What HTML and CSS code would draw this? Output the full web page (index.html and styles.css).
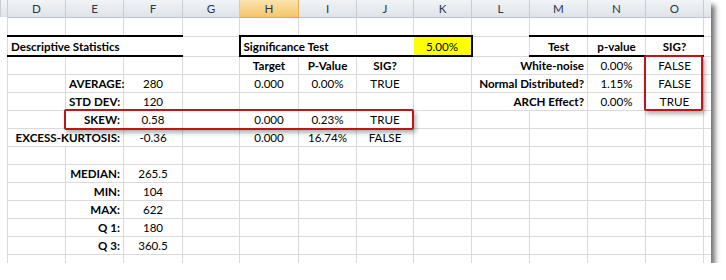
FILE: index.html
```html
<!DOCTYPE html>
<html>
<head>
<meta charset="utf-8">
<link rel="stylesheet" href="styles.css">
</head>
<body>
<div class="sheet">
<table class="grid">
<colgroup>
<col class="w7"><col class="w58"><col class="w58"><col class="w59"><col class="w57"><col class="w59"><col class="w58"><col class="w57"><col class="w58"><col class="w58"><col class="w58"><col class="w58"><col class="w58"><col class="w8">
</colgroup>
<tr class="hdr"><th class="c0"></th><th>D</th><th>E</th><th>F</th><th>G</th><th class="sel">H</th><th>I</th><th>J</th><th>K</th><th>L</th><th>M</th><th>N</th><th>O</th><th></th></tr>
<tr class="h19"><td class="c0"></td><td></td><td></td><td></td><td></td><td></td><td></td><td></td><td></td><td></td><td></td><td></td><td></td><td></td></tr>
<tr class="h20"><td class="c0"></td><td class="b bx l" colspan="2">Descriptive Statistics</td><td class="bx"></td><td></td><td class="b bx l bl" colspan="3">Significance Test</td><td class="alpha">5.00%</td><td></td><td class="b bt c">Test</td><td class="b bt c">p-value</td><td class="b bt c">SIG?</td><td></td></tr>
<tr><td class="c0"></td><td></td><td></td><td></td><td></td><td class="b c">Target</td><td class="b c">P-Value</td><td class="b c">SIG?</td><td></td><td class="b r" colspan="2">White-noise</td><td class="c">0.00%</td><td class="c">FALSE</td><td></td></tr>
<tr><td class="c0"></td><td></td><td class="b r">AVERAGE:</td><td class="c">280</td><td></td><td class="c">0.000</td><td class="c">0.00%</td><td class="c">TRUE</td><td></td><td class="b r" colspan="2">Normal Distributed?</td><td class="c">1.15%</td><td class="c">FALSE</td><td></td></tr>
<tr><td class="c0"></td><td></td><td class="b r">STD DEV:</td><td class="c">120</td><td></td><td></td><td></td><td></td><td></td><td class="b r" colspan="2">ARCH Effect?</td><td class="c">0.00%</td><td class="c">TRUE</td><td></td></tr>
<tr><td class="c0"></td><td></td><td class="b r">SKEW:</td><td class="c">0.58</td><td></td><td class="c">0.000</td><td class="c">0.23%</td><td class="c">TRUE</td><td></td><td></td><td></td><td></td><td></td><td></td></tr>
<tr><td class="c0"></td><td class="b r" colspan="2">EXCESS-KURTOSIS:</td><td class="c">-0.36</td><td></td><td class="c">0.000</td><td class="c">16.74%</td><td class="c">FALSE</td><td></td><td></td><td></td><td></td><td></td><td></td></tr>
<tr><td class="c0"></td><td></td><td></td><td></td><td></td><td></td><td></td><td></td><td></td><td></td><td></td><td></td><td></td><td></td></tr>
<tr><td class="c0"></td><td></td><td class="b r">MEDIAN:</td><td class="c">265.5</td><td></td><td></td><td></td><td></td><td></td><td></td><td></td><td></td><td></td><td></td></tr>
<tr><td class="c0"></td><td></td><td class="b r">MIN:</td><td class="c">104</td><td></td><td></td><td></td><td></td><td></td><td></td><td></td><td></td><td></td><td></td></tr>
<tr><td class="c0"></td><td></td><td class="b r">MAX:</td><td class="c">622</td><td></td><td></td><td></td><td></td><td></td><td></td><td></td><td></td><td></td><td></td></tr>
<tr><td class="c0"></td><td></td><td class="b r">Q 1:</td><td class="c">180</td><td></td><td></td><td></td><td></td><td></td><td></td><td></td><td></td><td></td><td></td></tr>
<tr><td class="c0"></td><td></td><td class="b r">Q 3:</td><td class="c">360.5</td><td></td><td></td><td></td><td></td><td></td><td></td><td></td><td></td><td></td><td></td></tr>
<tr class="h9"><td class="c0"></td><td></td><td></td><td></td><td></td><td></td><td></td><td></td><td></td><td></td><td></td><td></td><td></td><td></td></tr>
</table>
<div class="mark mark-skew"></div>
<div class="mark mark-sig"></div>
</div>
</body>
</html>
```
FILE: styles.css
```css
html, body {
  margin: 0;
  background: #fff;
}
body {
  font-family: Lato, "Liberation Sans", sans-serif;
  font-size: 11.6px;
  color: #000;
}
.sheet {
  position: relative;
  width: 711px;
  height: 263px;
  overflow: hidden;
  box-shadow: 4px 5px 5px rgba(0, 0, 0, 0.55);
}
.grid {
  border-collapse: collapse;
  table-layout: fixed;
  width: 711px;
}
.w7 { width: 7px; }
.w8 { width: 8px; }
.w57 { width: 57px; }
.w58 { width: 58px; }
.w59 { width: 59px; }
.grid tr { height: 18px; }
.grid tr.hdr { height: 17px; }
.grid tr.h19 { height: 19px; }
.grid tr.h20 { height: 20px; }
.grid tr.h9 { height: 9px; }
.grid th {
  font-weight: normal;
  color: #27374a;
  background: linear-gradient(#f1f3f6, #dfe3e8);
  border: 1px solid #c9ced6;
  border-top: none;
  border-bottom: 1px solid #b9c2cd;
  padding: 0;
  line-height: 15px;
  text-align: center;
}
.grid th.sel {
  background: linear-gradient(#fbe3ad, #f3c66b);
  border-color: #e3b14f;
  border-bottom-color: #e2a83a;
}
.grid td {
  border: 1px solid #dadada;
  padding: 0 3px;
  white-space: nowrap;
  overflow: visible;
  line-height: 14px;
  vertical-align: bottom;
  padding-bottom: 1px;
}
.grid td.c0 {
  border-top: hidden;
  border-bottom: hidden;
  border-left: hidden;
  padding: 0;
}
.b { font-weight: bold; }
.c { text-align: center; }
.l { text-align: left; }
.r { text-align: right; }
.grid td.bx {
  border-top: 2px solid #000;
  border-bottom: 2px solid #000;
  border-right: hidden;
}
.grid td.bl {
  border-left: 2px solid #000;
}
.grid td.bt {
  border-top: 2px solid #000;
  border-bottom: 2px solid #000;
}
.grid td.alpha {
  background: #ffff00;
  border: 2px solid #000;
  text-align: center;
}
.mark {
  position: absolute;
  box-sizing: border-box;
  border: 2px solid #c0141c;
  border-radius: 2px;
  box-shadow: 2px 3px 4px rgba(0, 0, 0, 0.3);
}
.mark-skew {
  left: 64px;
  top: 109px;
  width: 350px;
  height: 21px;
}
.mark-sig {
  left: 644px;
  top: 55px;
  width: 59px;
  height: 56px;
}
```
